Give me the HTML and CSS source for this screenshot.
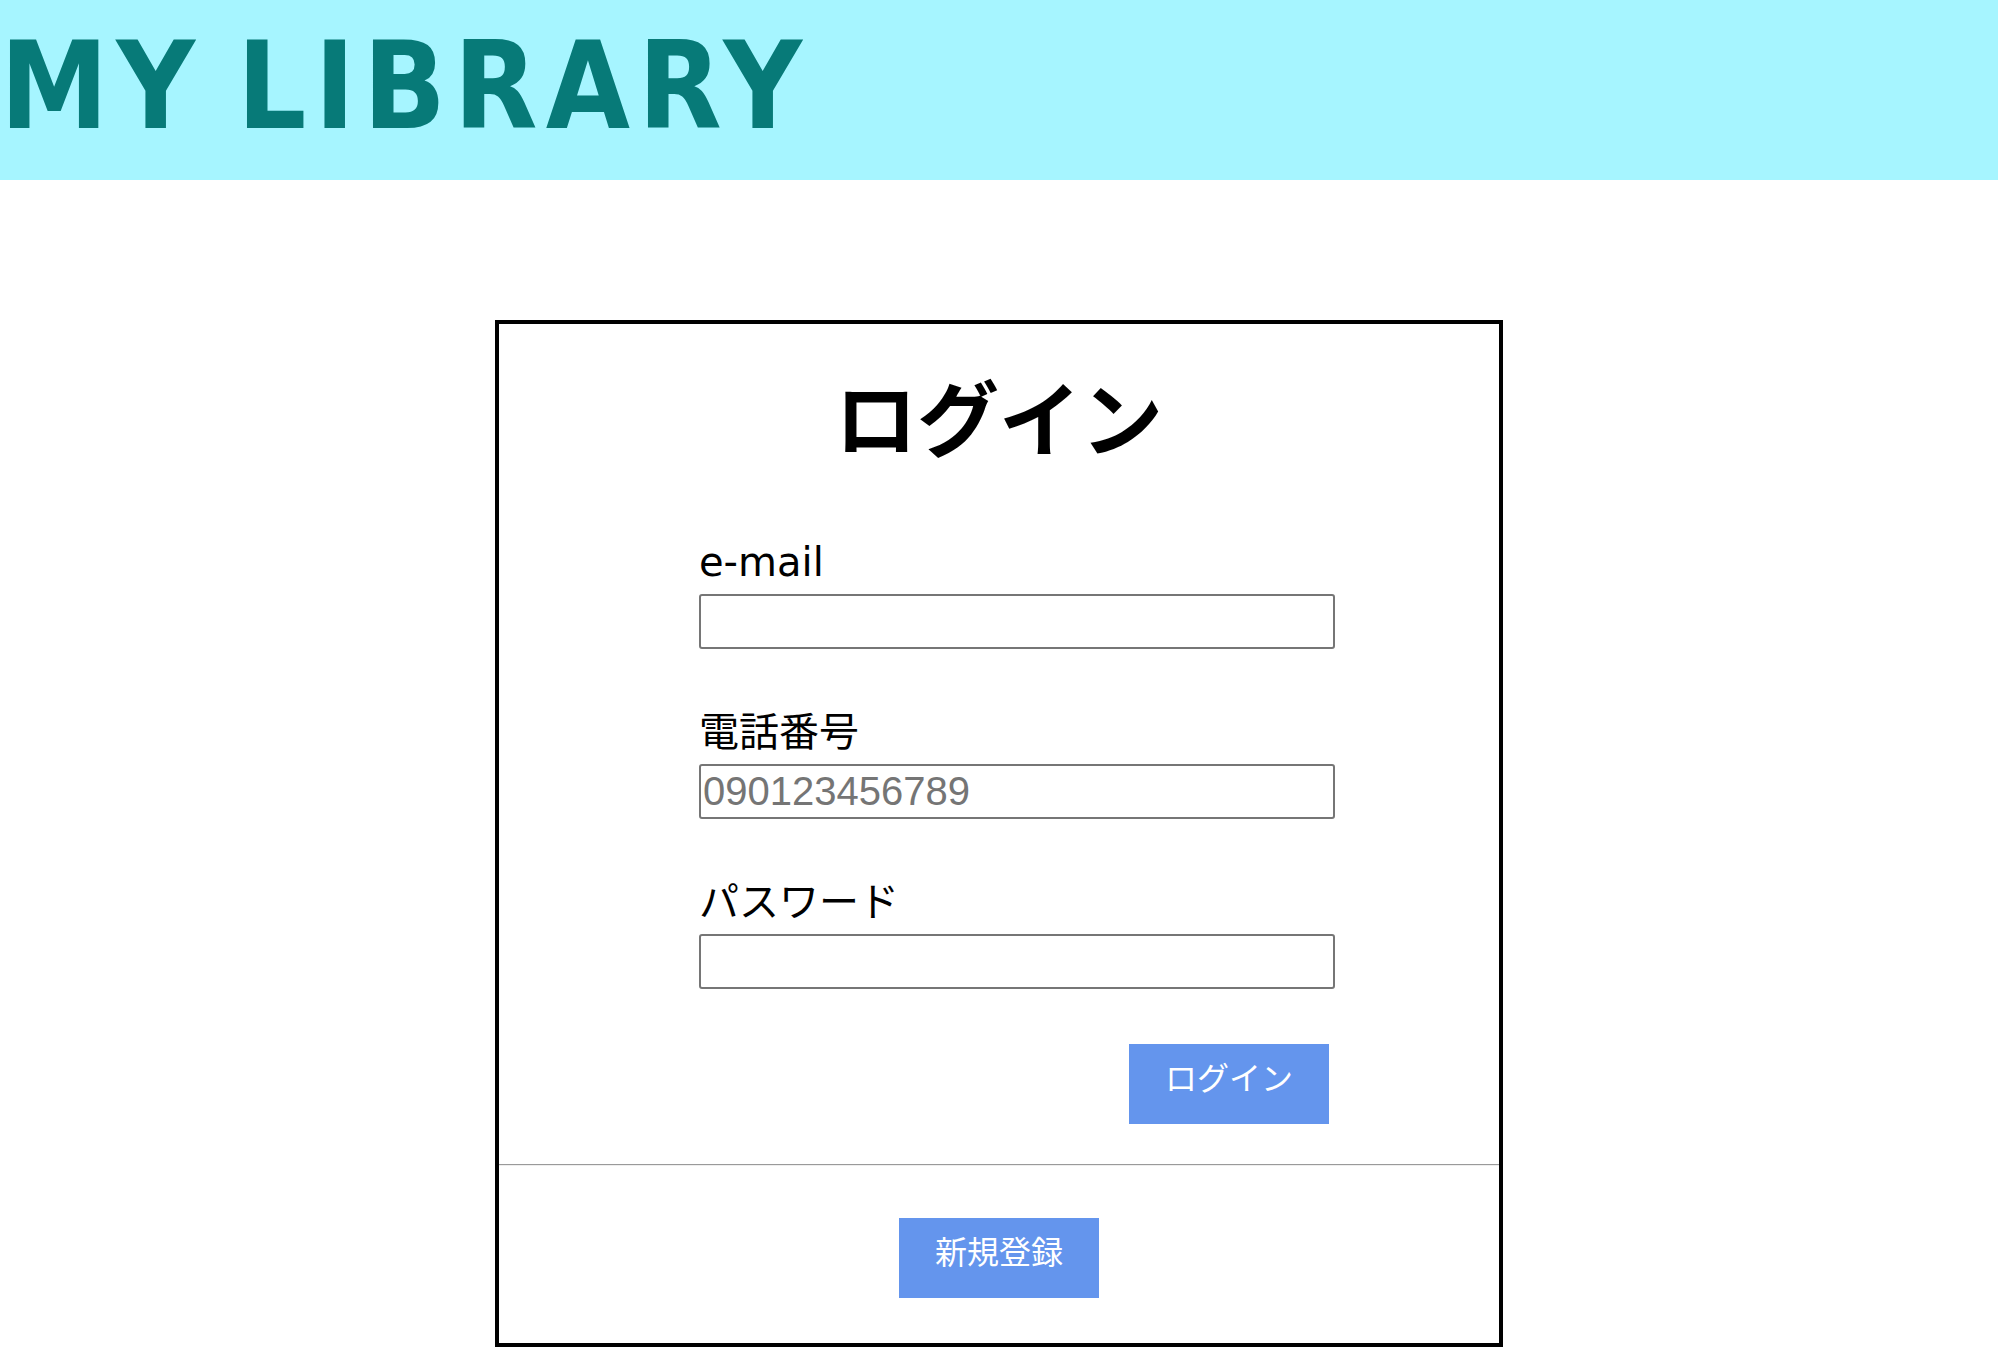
FILE: index.html
```html
<!DOCTYPE html>
<html lang="ja">
<head>
<meta charset="utf-8">
<title>MY LIBRARY</title>
<link rel="stylesheet" href="styles.css">
</head>
<body>
<header class="site-header">
  <h1 class="site-title">MY LIBRARY</h1>
</header>
<main class="login-card">
  <h2 class="login-title">ログイン</h2>
  <form class="login-form">
    <div class="field">
      <label class="field-label" for="email">e-mail</label>
      <input class="field-input" id="email" type="email">
    </div>
    <div class="field">
      <label class="field-label" for="tel">電話番号</label>
      <input class="field-input" id="tel" type="tel" placeholder="090123456789">
    </div>
    <div class="field">
      <label class="field-label" for="pw">パスワード</label>
      <input class="field-input" id="pw" type="password">
    </div>
    <div class="form-actions">
      <button class="btn" type="button">ログイン</button>
    </div>
  </form>
  <hr class="divider">
  <div class="register">
    <button class="btn" type="button">新規登録</button>
  </div>
</main>
</body>
</html>
```

FILE: styles.css
```css
html, body {
  margin: 0;
  padding: 0;
  background: #ffffff;
}

body {
  font-family: "DejaVu Sans", "Noto Sans CJK JP", sans-serif;
  color: #000;
}

.site-header {
  background: #a6f5ff;
  height: 180px;
  box-sizing: border-box;
  padding-top: 16px;
}

.site-title {
  margin: 0;
  font-family: "DejaVu Sans Condensed", "DejaVu Sans", sans-serif;
  font-stretch: condensed;
  font-weight: bold;
  font-size: 121px;
  line-height: 141px;
  letter-spacing: 8px;
  word-spacing: -12px;
  color: #077a78;
  white-space: nowrap;
}

.login-card {
  display: block;
  box-sizing: border-box;
  width: 1008px;
  margin: 140px auto 0;
  border: 4px solid #000;
  padding: 41px 0 45px;
}

.login-title {
  margin: 0;
  text-align: center;
  font-family: "Noto Sans CJK JP", sans-serif;
  font-weight: bold;
  font-size: 82px;
  line-height: 100px;
}

.login-form {
  margin: 73px 0 0 200px;
  width: 636px;
}

.field {
  display: flex;
  flex-direction: column;
  align-items: flex-start;
}

.field + .field {
  margin-top: 59px;
}

.field-label {
  font-size: 40px;
  line-height: 48px;
  margin-bottom: 8px;
}

.field-input {
  box-sizing: border-box;
  width: 636px;
  height: 55px;
  margin: 0;
  padding: 1px 2px;
  border: 2px solid #767676;
  border-radius: 3px;
  font-family: "Liberation Sans", Arial, sans-serif;
  font-size: 40px;
  background: #fff;
}

.field-input::placeholder {
  color: #757575;
}

.form-actions {
  display: flex;
  justify-content: flex-end;
  padding-right: 6px;
  margin-top: 55px;
}

.btn {
  display: flex;
  align-items: center;
  justify-content: center;
  box-sizing: border-box;
  width: 200px;
  height: 80px;
  padding: 0 0 16px;
  margin: 0;
  border: none;
  border-radius: 0;
  background: #6495ed;
  color: #fff;
  font-family: "Noto Sans CJK JP", sans-serif;
  font-weight: 400;
  font-size: 32px;
  cursor: pointer;
}

.divider {
  margin: 40px 0 0;
  border: 0;
  border-top: 1px solid #9a9a9a;
  border-bottom: 1px solid #eeeeee;
  height: 0;
}

.register {
  display: flex;
  justify-content: center;
  margin-top: 52px;
}
```
